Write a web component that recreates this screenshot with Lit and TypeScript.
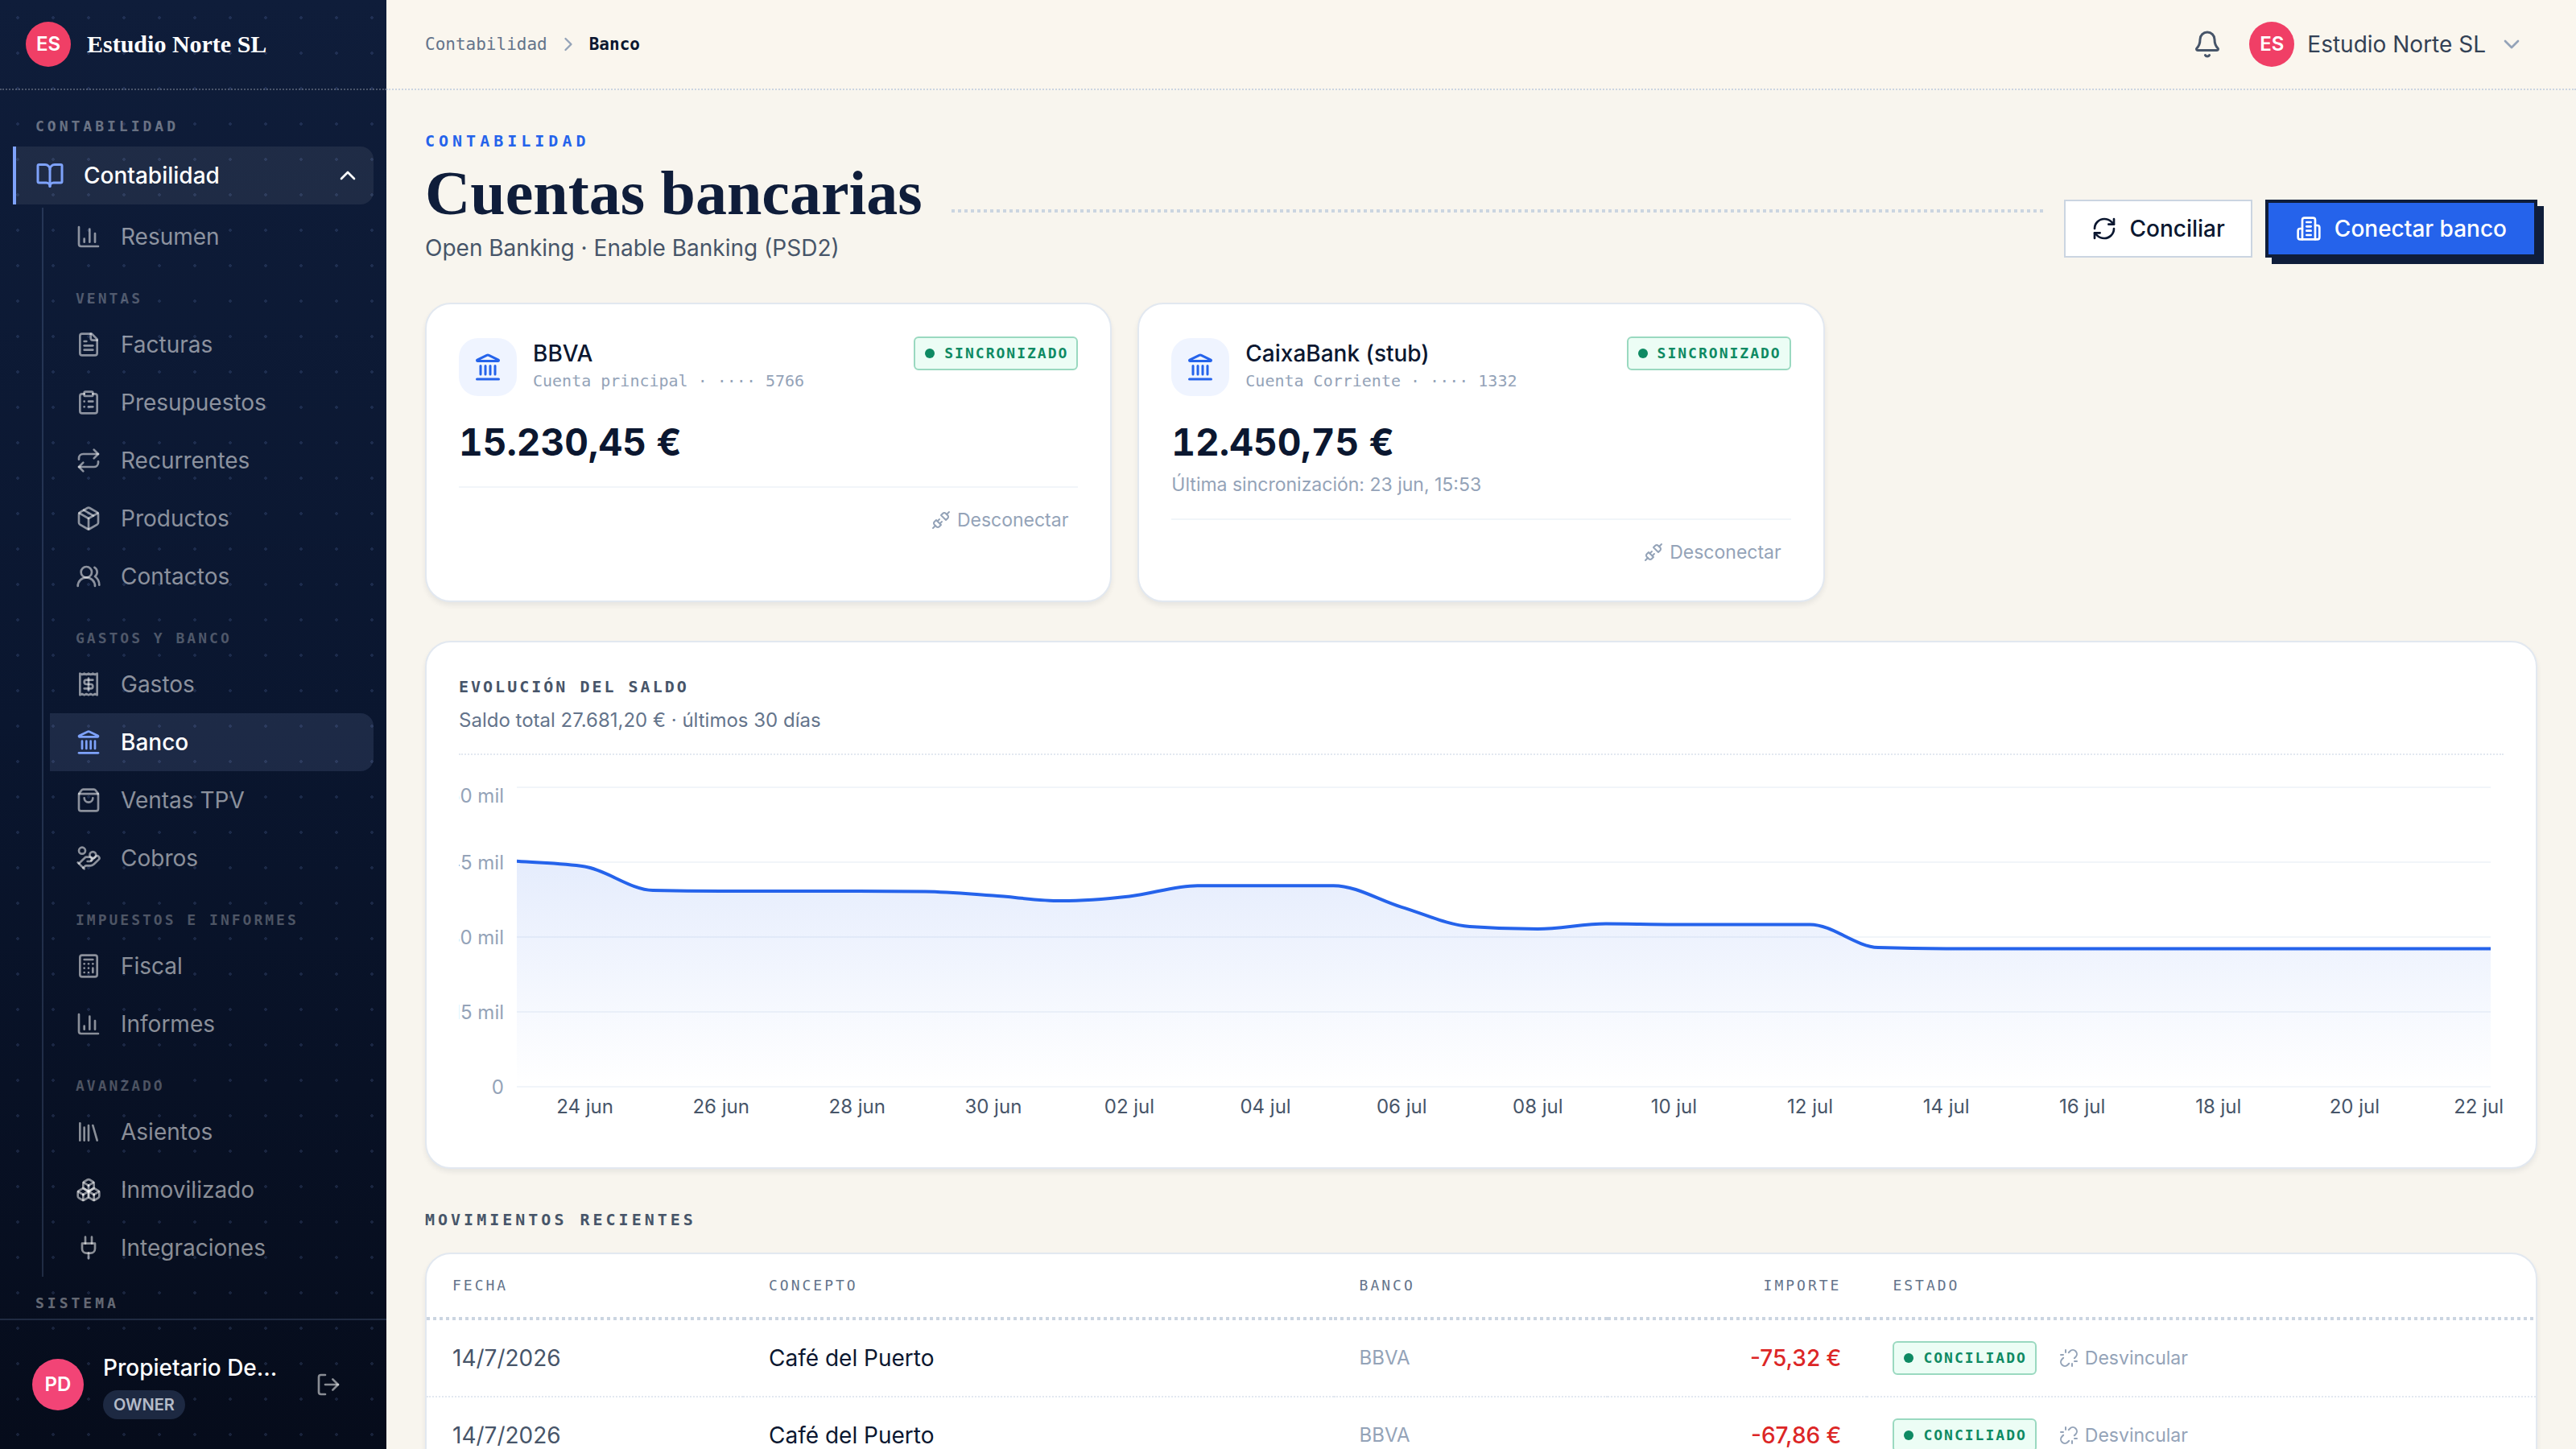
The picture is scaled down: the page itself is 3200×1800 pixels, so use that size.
import { LitElement, css, html, nothing, svg } from 'lit';
import { customElement, property, state } from 'lit/decorators.js';
import { classMap } from 'lit/directives/class-map.js';

const ICONS: Record<string, unknown> = {
  bell: svg`<path d="M10.268 21a2 2 0 0 0 3.464 0" /><path d="M3.262 15.326A1 1 0 0 0 4 17h16a1 1 0 0 0 .74-1.673C19.41 13.956 18 12.499 18 8A6 6 0 0 0 6 8c0 4.499-1.411 5.956-2.738 7.326" />`,
  book: svg`<path d="M12 7v14" /><path d="M3 18a1 1 0 0 1-1-1V4a1 1 0 0 1 1-1h5a4 4 0 0 1 4 4 4 4 0 0 1 4-4h5a1 1 0 0 1 1 1v13a1 1 0 0 1-1 1h-6a3 3 0 0 0-3 3 3 3 0 0 0-3-3z" />`,
  boxes: svg`<path d="M2.97 12.92A2 2 0 0 0 2 14.63v3.24a2 2 0 0 0 .97 1.71l3 1.8a2 2 0 0 0 2.06 0L12 19v-5.5l-5-3-4.03 2.42Z" /><path d="m7 16.5-4.74-2.85" /><path d="m7 16.5 5-3" /><path d="M7 16.5v5.17" /><path d="M12 13.5V19l3.97 2.38a2 2 0 0 0 2.06 0l3-1.8a2 2 0 0 0 .97-1.71v-3.24a2 2 0 0 0-.97-1.71L17 10.5l-5 3Z" /><path d="m17 16.5-5-3" /><path d="m17 16.5 4.74-2.85" /><path d="M17 16.5v5.17" /><path d="M7.97 4.42A2 2 0 0 0 7 6.13v4.37l5 3 5-3V6.13a2 2 0 0 0-.97-1.71l-3-1.8a2 2 0 0 0-2.06 0l-3 1.8Z" /><path d="M12 8 7.26 5.15" /><path d="m12 8 4.74-2.85" /><path d="M12 13.5V8" />`,
  building: svg`<path d="M6 22V4a2 2 0 0 1 2-2h8a2 2 0 0 1 2 2v18Z" /><path d="M6 12H4a2 2 0 0 0-2 2v6a2 2 0 0 0 2 2h2" /><path d="M18 9h2a2 2 0 0 1 2 2v9a2 2 0 0 1-2 2h-2" /><path d="M10 6h4" /><path d="M10 10h4" /><path d="M10 14h4" /><path d="M10 18h4" />`,
  calculator: svg`<rect width="16" height="20" x="4" y="2" rx="2" /><path d="M8 6h8" /><path d="M16 14v4" /><path d="M16 10h.01" /><path d="M12 10h.01" /><path d="M8 10h.01" /><path d="M12 14h.01" /><path d="M8 14h.01" /><path d="M12 18h.01" /><path d="M8 18h.01" />`,
  chart: svg`<path d="M3 3v16a2 2 0 0 0 2 2h16" /><path d="M18 17V9" /><path d="M13 17V5" /><path d="M8 17v-3" />`,
  'chevron-down': svg`<path d="m6 9 6 6 6-6" />`,
  'chevron-right': svg`<path d="m9 18 6-6-6-6" />`,
  'chevron-up': svg`<path d="m18 15-6-6-6 6" />`,
  clipboard: svg`<rect width="8" height="4" x="8" y="2" rx="1" /><path d="M16 4h2a2 2 0 0 1 2 2v14a2 2 0 0 1-2 2H6a2 2 0 0 1-2-2V6a2 2 0 0 1 2-2h2" /><path d="M12 11h4" /><path d="M12 16h4" /><path d="M8 11h.01" /><path d="M8 16h.01" />`,
  coins: svg`<path d="M11 15h2a2 2 0 1 0 0-4h-3c-.6 0-1.1.2-1.4.6L3 17" /><path d="m7 21 1.6-1.4c.3-.4.8-.6 1.4-.6h4c1.1 0 2.1-.4 2.8-1.2l4.6-4.4a2 2 0 0 0-2.75-2.91l-4.2 3.9" /><path d="m2 16 6 6" /><circle cx="16" cy="9" r="2.9" /><circle cx="6" cy="5" r="3" />`,
  file: svg`<path d="M15 2H6a2 2 0 0 0-2 2v16a2 2 0 0 0 2 2h12a2 2 0 0 0 2-2V7Z" /><path d="M14 2v4a2 2 0 0 0 2 2h4" /><path d="M10 9H8" /><path d="M16 13H8" /><path d="M16 17H8" />`,
  landmark: svg`<path d="M10 18v-7" /><path d="M11.12 2.198a2 2 0 0 1 1.76.006l7.866 3.847c.476.233.31.949-.22.949H3.474c-.53 0-.695-.716-.22-.949z" /><path d="M14 18v-7" /><path d="M18 18v-7" /><path d="M3 22h18" /><path d="M6 18v-7" />`,
  library: svg`<path d="m16 6 4 14" /><path d="M12 6v14" /><path d="M8 8v12" /><path d="M4 4v16" />`,
  logout: svg`<path d="m16 17 5-5-5-5" /><path d="M21 12H9" /><path d="M9 21H5a2 2 0 0 1-2-2V5a2 2 0 0 1 2-2h4" />`,
  package: svg`<path d="M11 21.73a2 2 0 0 0 2 0l7-4A2 2 0 0 0 21 16V8a2 2 0 0 0-1-1.73l-7-4a2 2 0 0 0-2 0l-7 4A2 2 0 0 0 3 8v8a2 2 0 0 0 1 1.73z" /><path d="M12 22V12" /><path d="M3.29 7 12 12l8.71-5" /><path d="m7.5 4.27 9 5.15" />`,
  plug: svg`<path d="M12 22v-5" /><path d="M9 8V2" /><path d="M15 8V2" /><path d="M18 8v5a4 4 0 0 1-4 4h-4a4 4 0 0 1-4-4V8Z" />`,
  receipt: svg`<path d="M4 2v20l2-1 2 1 2-1 2 1 2-1 2 1 2-1 2 1V2l-2 1-2-1-2 1-2-1-2 1-2-1-2 1Z" /><path d="M16 8h-6a2 2 0 1 0 0 4h4a2 2 0 1 1 0 4H8" /><path d="M12 17.5v-11" />`,
  refresh: svg`<path d="M3 12a9 9 0 0 1 9-9 9.75 9.75 0 0 1 6.74 2.74L21 8" /><path d="M21 3v5h-5" /><path d="M21 12a9 9 0 0 1-9 9 9.75 9.75 0 0 1-6.74-2.74L3 16" /><path d="M8 16H3v5" />`,
  repeat: svg`<path d="m17 2 4 4-4 4" /><path d="M3 11v-1a4 4 0 0 1 4-4h14" /><path d="m7 22-4-4 4-4" /><path d="M21 13v1a4 4 0 0 1-4 4H3" />`,
  shopping: svg`<path d="M16 10a4 4 0 0 1-8 0" /><path d="M3.103 6.034h17.794" /><path d="M3.4 5.467a2 2 0 0 0-.4 1.2V20a2 2 0 0 0 2 2h14a2 2 0 0 0 2-2V6.667a2 2 0 0 0-.4-1.2l-2-2.667A2 2 0 0 0 17 2H7a2 2 0 0 0-1.6.8z" />`,
  unlink: svg`<path d="m18.84 12.25 1.72-1.71h-.02a5.004 5.004 0 0 0-.12-7.07 5.006 5.006 0 0 0-6.95 0l-1.72 1.71" /><path d="m5.17 11.75-1.71 1.71a5.004 5.004 0 0 0 .12 7.07 5.006 5.006 0 0 0 6.95 0l1.71-1.71" /><path d="M8 2v3" /><path d="M2 8h3" /><path d="M16 19v3" /><path d="M19 16h3" />`,
  unplug: svg`<path d="m19 5 3-3" /><path d="m2 22 3-3" /><path d="M6.3 20.3a2.4 2.4 0 0 0 3.4 0L12 18l-6-6-2.3 2.3a2.4 2.4 0 0 0 0 3.4Z" /><path d="M7.5 13.5 10 11" /><path d="M10.5 16.5 13 14" /><path d="m12 6 6 6 2.3-2.3a2.4 2.4 0 0 0 0-3.4l-2.6-2.6a2.4 2.4 0 0 0-3.4 0Z" />`,
  users: svg`<path d="M18 21a8 8 0 0 0-16 0" /><circle cx="10" cy="8" r="5" /><path d="M22 20c0-3.37-2-6.5-4-8a5 5 0 0 0-.45-8.3" />`,
};

@customElement('app-icon')
export class AppIcon extends LitElement {
  static styles = css`
    :host {
      display: block;
      flex: none;
      width: 32px;
      height: 32px;
    }

    svg {
      display: block;
      width: 100%;
      height: 100%;
      fill: none;
      stroke: currentColor;
      stroke-width: 2;
      stroke-linecap: round;
      stroke-linejoin: round;
    }
  `;

  @property() name = '';

  render() {
    return html`<svg viewBox="0 0 24 24" aria-hidden="true">${ICONS[this.name]}</svg>`;
  }
}

@customElement('status-badge')
export class StatusBadge extends LitElement {
  static styles = css`
    :host {
      display: inline-flex;
      align-items: center;
      gap: 12px;
      box-sizing: border-box;
      height: 42px;
      padding: 0 10px 0 12px;
      border: 2px solid #9ad9c0;
      border-radius: 6px;
      background: #ecfdf5;
      color: #0e8a63;
      font: 700 18px/38px 'DejaVu Sans Mono', monospace;
      letter-spacing: 2px;
      text-transform: uppercase;
      white-space: nowrap;
    }

    .dot {
      width: 12px;
      height: 12px;
      border-radius: 50%;
      background: currentColor;
    }
  `;

  render() {
    return html`<span class="dot"></span><slot></slot>`;
  }
}

const CHART_TOP = 16;
const CHART_HEIGHT = 372;
const CHART_MAX = 60;

/** Monotone cubic interpolation through evenly spaced points (x = index). */
function monotonePath(ys: number[]): string {
  const n = ys.length;
  const slopes = ys.slice(1).map((y, i) => y - ys[i]);
  const tangents = ys.map((_, i) => {
    if (i === 0) return slopes[0];
    if (i === n - 1) return slopes[n - 2];
    const a = slopes[i - 1];
    const b = slopes[i];
    if (a * b <= 0) return 0;
    return Math.sign(a) * Math.min(Math.abs(a), Math.abs(b), Math.abs(a + b) / 4) * 2;
  });
  let d = `M0,${ys[0]}`;
  for (let i = 1; i < n; i++) {
    const c1 = ys[i - 1] + tangents[i - 1] / 3;
    const c2 = ys[i] - tangents[i] / 3;
    d += `C${i - 1 + 1 / 3},${c1} ${i - 1 / 3},${c2} ${i},${ys[i]}`;
  }
  return d;
}

@customElement('balance-chart')
export class BalanceChart extends LitElement {
  static styles = css`
    :host {
      display: flex;
      gap: 16px;
      height: 448px;
      padding-right: 16px;
    }

    text {
      font: 400 24px Inter, sans-serif;
    }

    .y-axis {
      flex: none;
      width: 56px;
      height: 100%;
      overflow: hidden;
    }

    .y-axis text {
      fill: #94a3b8;
      text-anchor: end;
    }

    .plot {
      flex: 1;
      min-width: 0;
      height: 100%;
      overflow: visible;
    }

    .plot text {
      fill: #475569;
      text-anchor: middle;
    }

    .plot text.last {
      text-anchor: end;
    }

    .grid {
      stroke: #f1f5f9;
      stroke-width: 2;
    }

    .line {
      fill: none;
      stroke: #2563eb;
      stroke-width: 4;
      vector-effect: non-scaling-stroke;
    }
  `;

  @property({ attribute: false }) values: number[] = [];
  @property({ attribute: false }) labels: string[] = [];

  render() {
    const last = this.values.length - 1;
    const line = monotonePath(this.values.map((v) => CHART_MAX - v));
    const ticks = [60, 45, 30, 15, 0];
    const tickY = (t: number) => CHART_TOP + ((CHART_MAX - t) / CHART_MAX) * CHART_HEIGHT;

    return html`
      <svg class="y-axis">
        ${ticks.map(
          (t) => svg`<text x="100%" y=${Math.max(tickY(t), 26) + 9}>${t ? `${t} mil` : '0'}</text>`,
        )}
      </svg>
      <svg class="plot" role="img" aria-label="Evolución del saldo">
        <defs>
          <linearGradient id="fill" x1="0" y1="0" x2="0" y2="1">
            <stop offset="0" stop-color="#2563eb" stop-opacity="0.12" />
            <stop offset="1" stop-color="#2563eb" stop-opacity="0" />
          </linearGradient>
        </defs>
        ${ticks.map(
          (t) => svg`<line class="grid" x1="0" x2="100%" y1=${tickY(t)} y2=${tickY(t)} />`,
        )}
        <svg
          y=${CHART_TOP}
          width="100%"
          height=${CHART_HEIGHT}
          viewBox="0 0 ${last} ${CHART_MAX}"
          preserveAspectRatio="none"
        >
          <path d="${line}L${last},${CHART_MAX}L0,${CHART_MAX}Z" fill="url(#fill)" />
          <path class="line" d=${line} />
        </svg>
        ${this.labels.map((label, i) => {
          const index = i * 2 + 1;
          return index === last
            ? svg`<text class="last" x="100%" dx="16" y="421">${label}</text>`
            : svg`<text x="${(index / last) * 100}%" y="421">${label}</text>`;
        })}
      </svg>
    `;
  }
}

interface NavItem {
  icon: string;
  label: string;
}

interface NavGroup {
  title?: string;
  items: NavItem[];
}

const NAV: NavGroup[] = [
  { items: [{ icon: 'chart', label: 'Resumen' }] },
  {
    title: 'Ventas',
    items: [
      { icon: 'file', label: 'Facturas' },
      { icon: 'clipboard', label: 'Presupuestos' },
      { icon: 'repeat', label: 'Recurrentes' },
      { icon: 'package', label: 'Productos' },
      { icon: 'users', label: 'Contactos' },
    ],
  },
  {
    title: 'Gastos y banco',
    items: [
      { icon: 'receipt', label: 'Gastos' },
      { icon: 'landmark', label: 'Banco' },
      { icon: 'shopping', label: 'Ventas TPV' },
      { icon: 'coins', label: 'Cobros' },
    ],
  },
  {
    title: 'Impuestos e informes',
    items: [
      { icon: 'calculator', label: 'Fiscal' },
      { icon: 'chart', label: 'Informes' },
    ],
  },
  {
    title: 'Avanzado',
    items: [
      { icon: 'library', label: 'Asientos' },
      { icon: 'boxes', label: 'Inmovilizado' },
      { icon: 'plug', label: 'Integraciones' },
    ],
  },
];

const ACCOUNTS = [
  { bank: 'BBVA', detail: 'Cuenta principal · ···· 5766', balance: '15.230,45 €', sync: '' },
  {
    bank: 'CaixaBank (stub)',
    detail: 'Cuenta Corriente · ···· 1332',
    balance: '12.450,75 €',
    sync: 'Última sincronización: 23 jun, 15:53',
  },
];

// Saldo diario en miles de euros, 23 jun - 22 jul
const BALANCES = [
  45.2, 44.1, 39.35, 39.2, 39.2, 39.2, 39.1, 38.3, 37.25, 38.15, 40.3, 40.3, 40.3, 36, 32.1, 31.6,
  32.65, 32.5, 32.5, 32.5, 27.9, 27.68, 27.68, 27.68, 27.68, 27.68, 27.68, 27.68, 27.68, 27.68,
];

const DAYS = [
  '24 jun', '26 jun', '28 jun', '30 jun', '02 jul', '04 jul', '06 jul', '08 jul',
  '10 jul', '12 jul', '14 jul', '16 jul', '18 jul', '20 jul', '22 jul',
];

const MOVEMENTS = [
  { date: '14/7/2026', concept: 'Café del Puerto', bank: 'BBVA', amount: '-75,32 €' },
  { date: '14/7/2026', concept: 'Café del Puerto', bank: 'BBVA', amount: '-67,86 €' },
];

@customElement('app-root')
export class AppRoot extends LitElement {
  static styles = css`
    :host {
      --navy: #0f1d3a;
      --ink: #0b1730;
      --blue: #2563eb;
      --mono: 'DejaVu Sans Mono', monospace;
      display: grid;
      grid-template-columns: 480px minmax(0, 1fr);
      height: 100vh;
      overflow: hidden;
      background: #f8f5ee;
      color: var(--ink);
      font: 400 28px/40px Inter, sans-serif;
    }

    * {
      box-sizing: border-box;
    }

    h1,
    h2,
    p {
      margin: 0;
    }

    a {
      color: inherit;
      text-decoration: none;
    }

    button {
      border: 0;
      padding: 0;
      background: none;
      color: inherit;
      font: inherit;
      cursor: pointer;
    }

    .avatar {
      display: grid;
      place-items: center;
      flex: none;
      width: 56px;
      height: 56px;
      border-radius: 50%;
      background: #f03f66;
      color: #fff;
      font-size: 24px;
      font-weight: 600;
    }

    .avatar.user {
      width: 64px;
      height: 64px;
      background: #f24476;
    }

    /* Sidebar */
    .sidebar {
      display: flex;
      flex-direction: column;
      min-height: 0;
      background:
        radial-gradient(circle, rgba(120, 150, 220, 0.16) 2px, transparent 2px) 0 0 / 44px 44px,
        linear-gradient(#0f1d3a, #0a162f 50%, #060c1b);
      color: rgba(255, 255, 255, 0.53);
    }

    .brand {
      display: flex;
      align-items: center;
      gap: 20px;
      height: 112px;
      padding: 0 32px;
      border-bottom: 2px dotted rgba(255, 255, 255, 0.25);
      color: #fff;
      font: 700 30px/40px 'Liberation Serif', serif;
    }

    .brand .avatar {
      font-family: Inter, sans-serif;
      font-size: 24px;
      font-weight: 600;
    }

    .menu {
      flex: 1;
      min-height: 0;
      overflow: hidden;
      padding: 24px 16px 0;
    }

    .nav-section {
      padding: 8px 28px 12px;
      color: rgba(255, 255, 255, 0.4);
      font: 700 18px/26px var(--mono);
      letter-spacing: 4px;
      text-transform: uppercase;
    }

    .nav-toggle {
      display: flex;
      align-items: center;
      gap: 24px;
      width: 100%;
      height: 72px;
      padding: 0 16px 0 24px;
      border-left: 4px solid #7ea2fa;
      border-radius: 0 16px 16px 0;
      background: rgba(255, 255, 255, 0.07);
      color: #fff;
      font-weight: 500;
      text-align: left;
    }

    .nav-toggle span {
      flex: 1;
    }

    .nav-toggle .lead {
      width: 36px;
      height: 36px;
      color: #7ea2fa;
    }

    .tree {
      margin: 4px 0 12px 36px;
      padding-left: 8px;
      border-left: 2px solid rgba(150, 175, 230, 0.18);
    }

    .nav-title {
      padding: 28px 32px 8px;
      color: rgba(255, 255, 255, 0.28);
      font: 700 18px/26px var(--mono);
      letter-spacing: 3px;
      text-transform: uppercase;
    }

    .nav-item {
      display: flex;
      align-items: center;
      gap: 24px;
      height: 72px;
      padding: 0 32px;
      border-radius: 0 16px 16px 0;
    }

    .nav-item.active {
      background: rgba(160, 180, 230, 0.13);
      color: #fff;
      font-weight: 500;
    }

    .nav-item.active app-icon {
      color: #7ea2fa;
    }

    .account {
      display: flex;
      align-items: center;
      gap: 24px;
      height: 162px;
      padding: 0 40px;
      border-top: 2px solid rgba(150, 175, 230, 0.18);
    }

    .account-info {
      flex: 1;
      min-width: 0;
    }

    .account-name {
      overflow: hidden;
      color: #fff;
      font-weight: 500;
      line-height: 44px;
      text-overflow: ellipsis;
      white-space: nowrap;
    }

    .role {
      display: block;
      width: max-content;
      margin-top: 6px;
      padding: 0 13px;
      border-radius: 18px;
      background: #1d2942;
      color: #b4bbc8;
      font-size: 20px;
      font-weight: 600;
      line-height: 36px;
    }

    .logout {
      display: grid;
      place-items: center;
      width: 64px;
      height: 64px;
    }

    /* Top bar */
    .content {
      display: flex;
      flex-direction: column;
      min-height: 0;
    }

    .topbar {
      display: flex;
      flex: none;
      align-items: center;
      justify-content: space-between;
      height: 112px;
      padding: 0 64px 0 48px;
      border-bottom: 2px dotted #cbd5e1;
      background: #faf6ee;
    }

    .crumbs {
      display: flex;
      align-items: center;
      gap: 12px;
      color: #64748b;
      font: 400 21px/32px var(--mono);
    }

    .crumbs app-icon {
      width: 28px;
      height: 28px;
      color: #94a3b8;
    }

    .crumbs [aria-current] {
      color: var(--ink);
      font-weight: 700;
    }

    .tools {
      display: flex;
      align-items: center;
      gap: 34px;
      color: #475569;
    }

    .tools .bell app-icon {
      width: 36px;
      height: 36px;
    }

    .profile {
      display: flex;
      align-items: center;
      gap: 16px;
      color: #334155;
    }

    .profile app-icon {
      color: #94a3b8;
    }

    /* Page */
    main {
      flex: 1;
      min-height: 0;
      overflow: hidden;
      padding: 48px 48px 0;
    }

    .page-head {
      display: flex;
      align-items: flex-end;
      margin-bottom: 48px;
    }

    .eyebrow {
      color: var(--blue);
      font: 700 20px/30px var(--mono);
      letter-spacing: 5px;
      text-transform: uppercase;
    }

    h1 {
      margin: 8px 0 6px;
      color: var(--navy);
      font: 700 78px/84px 'Liberation Serif', serif;
    }

    .lede {
      color: #475569;
    }

    .rule {
      flex: 1;
      height: 4px;
      margin: 0 24px 64px 36px;
      background: repeating-linear-gradient(90deg, #cbd5e1 0 4px, transparent 4px 8px);
    }

    .actions {
      display: flex;
      gap: 16px;
      margin-bottom: 8px;
    }

    .btn {
      display: flex;
      align-items: center;
      gap: 16px;
      height: 72px;
      padding: 0 32px;
      border: 2px solid #cbd5e1;
      background: #fff;
      font-weight: 500;
    }

    .btn.primary {
      padding: 0 34px;
      border: 4px solid var(--navy);
      background: var(--blue);
      box-shadow: 8px 8px 0 var(--navy);
      color: #fff;
    }

    .card {
      border: 2px solid #e2e8f0;
      border-radius: 32px;
      background: #fff;
      box-shadow: 0 4px 6px rgba(15, 29, 58, 0.07);
    }

    .accounts {
      display: grid;
      grid-template-columns: repeat(3, minmax(0, 1fr));
      gap: 32px;
      margin-bottom: 48px;
    }

    .bank {
      padding: 40px;
    }

    .bank-head {
      display: flex;
      align-items: flex-start;
      gap: 20px;
      height: 76px;
    }

    .tile {
      display: grid;
      place-items: center;
      align-self: center;
      width: 72px;
      height: 72px;
      border-radius: 24px;
      background: #eff4ff;
      color: var(--blue);
    }

    .tile app-icon {
      width: 36px;
      height: 36px;
    }

    .bank-name {
      flex: 1;
      min-width: 0;
    }

    .bank-name h2 {
      font-size: 28px;
      font-weight: 500;
      line-height: 42px;
    }

    .bank-name p {
      color: #94a3b8;
      font: 400 20px/26px var(--mono);
    }

    .balance {
      margin-top: 24px;
      font-size: 46px;
      font-weight: 700;
      font-variant-numeric: tabular-nums;
      line-height: 62px;
    }

    .sync {
      margin-top: 4px;
      color: #94a3b8;
      font-size: 23px;
      line-height: 36px;
    }

    .bank-foot {
      display: flex;
      justify-content: flex-end;
      margin-top: 24px;
      padding-top: 20px;
      border-top: 2px solid #f1f5f9;
    }

    .link {
      display: inline-flex;
      align-items: center;
      gap: 8px;
      height: 40px;
      padding: 0 12px;
      color: #94a3b8;
      font-size: 23px;
      font-weight: 400;
    }

    .link app-icon {
      width: 24px;
      height: 24px;
    }

    .evolution {
      margin-bottom: 48px;
      padding: 40px;
    }

    .evolution header {
      margin-bottom: 24px;
      padding-bottom: 22px;
      border-bottom: 2px dotted #e2e8f0;
    }

    .label {
      color: #475569;
      font: 700 20px/30px var(--mono);
      letter-spacing: 3px;
      text-transform: uppercase;
    }

    .evolution p {
      margin-top: 8px;
      color: #64748b;
      font-size: 24px;
      line-height: 38px;
    }

    .movements .label {
      margin-bottom: 26px;
      letter-spacing: 4px;
    }

    .table-card {
      overflow: hidden;
    }

    table {
      width: 100%;
      border-collapse: separate;
      border-spacing: 0;
      table-layout: fixed;
    }

    .col-date {
      width: 15%;
    }

    .col-concept {
      width: 28%;
    }

    .col-bank {
      width: 13%;
    }

    .col-amount {
      width: 12.3%;
    }

    th {
      height: 82px;
      padding: 0 32px 4px;
      background: repeating-linear-gradient(90deg, #cbd5e1 0 4px, transparent 4px 8px) 0 100% /
        100% 4px no-repeat;
      color: #64748b;
      font: 400 18px/28px var(--mono);
      letter-spacing: 3px;
      text-align: left;
      text-transform: uppercase;
    }

    td {
      height: 96px;
      padding: 0 32px;
      border-bottom: 2px dotted #e2e8f0;
      white-space: nowrap;
    }

    .num {
      text-align: right;
    }

    td.num {
      color: #dc2626;
      font-weight: 500;
    }

    td.date {
      color: #475569;
    }

    td.muted {
      color: #94a3b8;
      font-size: 24px;
    }

    .state {
      display: flex;
      align-items: center;
      gap: 16px;
    }
  `;

  @state() private open = true;
  @state() private current = 'Banco';

  private renderItem(item: NavItem) {
    return html`
      <a
        href="#"
        class=${classMap({ 'nav-item': true, active: item.label === this.current })}
        @click=${(e: Event) => {
          e.preventDefault();
          this.current = item.label;
        }}
      >
        <app-icon name=${item.icon}></app-icon>${item.label}
      </a>
    `;
  }

  private renderSidebar() {
    return html`
      <aside class="sidebar">
        <div class="brand"><span class="avatar">ES</span>Estudio Norte SL</div>
        <nav class="menu" aria-label="Principal">
          <div class="nav-section">Contabilidad</div>
          <button
            class="nav-toggle"
            aria-expanded=${this.open ? 'true' : 'false'}
            @click=${() => (this.open = !this.open)}
          >
            <app-icon class="lead" name="book"></app-icon>
            <span>Contabilidad</span>
            <app-icon name=${this.open ? 'chevron-up' : 'chevron-down'}></app-icon>
          </button>
          ${this.open
            ? html`<div class="tree">
                ${NAV.map(
                  (group) => html`
                    ${group.title ? html`<div class="nav-title">${group.title}</div>` : nothing}
                    ${group.items.map((item) => this.renderItem(item))}
                  `,
                )}
              </div>`
            : nothing}
          <div class="nav-section">Sistema</div>
        </nav>
        <div class="account">
          <span class="avatar user">PD</span>
          <div class="account-info">
            <div class="account-name">Propietario Demo</div>
            <span class="role">OWNER</span>
          </div>
          <button class="logout" aria-label="Cerrar sesión">
            <app-icon name="logout"></app-icon>
          </button>
        </div>
      </aside>
    `;
  }

  private renderTopbar() {
    return html`
      <header class="topbar">
        <nav class="crumbs" aria-label="Ruta">
          <a href="#">Contabilidad</a>
          <app-icon name="chevron-right"></app-icon>
          <span aria-current="page">Banco</span>
        </nav>
        <div class="tools">
          <button class="bell" aria-label="Notificaciones"><app-icon name="bell"></app-icon></button>
          <button class="profile">
            <span class="avatar">ES</span>Estudio Norte SL<app-icon name="chevron-down"></app-icon>
          </button>
        </div>
      </header>
    `;
  }

  private renderAccount(account: (typeof ACCOUNTS)[number]) {
    return html`
      <article class="card bank">
        <div class="bank-head">
          <span class="tile"><app-icon name="landmark"></app-icon></span>
          <div class="bank-name">
            <h2>${account.bank}</h2>
            <p>${account.detail}</p>
          </div>
          <status-badge>Sincronizado</status-badge>
        </div>
        <div class="balance">${account.balance}</div>
        ${account.sync ? html`<p class="sync">${account.sync}</p>` : nothing}
        <div class="bank-foot">
          <button class="link"><app-icon name="unplug"></app-icon>Desconectar</button>
        </div>
      </article>
    `;
  }

  private renderMovements() {
    return html`
      <section class="movements">
        <h2 class="label">Movimientos recientes</h2>
        <div class="card table-card">
          <table>
            <colgroup>
              <col class="col-date" />
              <col class="col-concept" />
              <col class="col-bank" />
              <col class="col-amount" />
              <col />
            </colgroup>
            <thead>
              <tr>
                <th>Fecha</th>
                <th>Concepto</th>
                <th>Banco</th>
                <th class="num">Importe</th>
                <th>Estado</th>
              </tr>
            </thead>
            <tbody>
              ${MOVEMENTS.map(
                (m) => html`
                  <tr>
                    <td class="date">${m.date}</td>
                    <td>${m.concept}</td>
                    <td class="muted">${m.bank}</td>
                    <td class="num">${m.amount}</td>
                    <td>
                      <div class="state">
                        <status-badge>Conciliado</status-badge>
                        <button class="link"><app-icon name="unlink"></app-icon>Desvincular</button>
                      </div>
                    </td>
                  </tr>
                `,
              )}
            </tbody>
          </table>
        </div>
      </section>
    `;
  }

  render() {
    return html`
      ${this.renderSidebar()}
      <div class="content">
        ${this.renderTopbar()}
        <main>
          <div class="page-head">
            <div>
              <div class="eyebrow">Contabilidad</div>
              <h1>Cuentas bancarias</h1>
              <p class="lede">Open Banking · Enable Banking (PSD2)</p>
            </div>
            <div class="rule"></div>
            <div class="actions">
              <button class="btn"><app-icon name="refresh"></app-icon>Conciliar</button>
              <button class="btn primary"><app-icon name="building"></app-icon>Conectar banco</button>
            </div>
          </div>
          <section class="accounts">${ACCOUNTS.map((a) => this.renderAccount(a))}</section>
          <section class="card evolution">
            <header>
              <h2 class="label">Evolución del saldo</h2>
              <p>Saldo total 27.681,20 € · últimos 30 días</p>
            </header>
            <balance-chart .values=${BALANCES} .labels=${DAYS}></balance-chart>
          </section>
          ${this.renderMovements()}
        </main>
      </div>
    `;
  }
}

declare global {
  interface HTMLElementTagNameMap {
    'app-icon': AppIcon;
    'status-badge': StatusBadge;
    'balance-chart': BalanceChart;
    'app-root': AppRoot;
  }
}
